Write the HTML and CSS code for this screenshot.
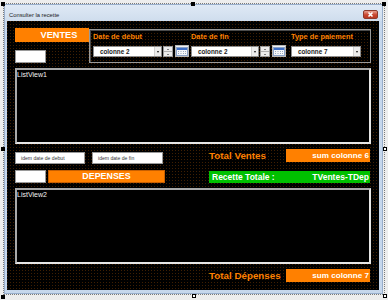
FILE: index.html
```html
<!DOCTYPE html>
<html lang="fr">
<head>
<meta charset="utf-8">
<title>Consulter la recette</title>
<link rel="stylesheet" href="styles.css">
</head>
<body>
<div class="designer">
  <div class="selection"></div>
  <div class="form">
    <div class="titlebar">
      <span class="title">Consulter la recette</span>
      <span class="close"><svg width="15" height="9" viewBox="0 0 15 9"><path d="M5.5 2.5l4 4M9.5 2.5l-4 4" stroke="#fff" stroke-width="1.6"/></svg></span>
    </div>
    <div class="client">
      <div class="row1">
        <div class="leftcol">
          <div class="ventes">VENTES</div>
          <div class="whitebox wb1"></div>
        </div>
        <div class="frame">
          <div class="fcol c1">
            <div class="flabel">Date de début</div>
            <div class="ctrls">
              <div class="combo w69"><span class="ctext">colonne 2</span><span class="drop"><i></i></span></div>
              <div class="spin"><span class="up"><i></i></span><span class="down"><i></i></span></div>
              <div class="cal"><svg width="12" height="9" viewBox="0 0 12 9"><rect x="0.5" y="0.5" width="11" height="8" fill="#f4f7fb" stroke="#8aa2c8"/><rect x="1" y="1" width="10" height="2" fill="#3f6fc6"/><path d="M2 4.5h1M4.5 4.5h1M7 4.5h1M9 4.5h1M2 6.5h1M4.5 6.5h1M7 6.5h1M9 6.5h1" stroke="#9aa8bc"/></svg></div>
            </div>
          </div>
          <div class="fcol c2">
            <div class="flabel">Date de fin</div>
            <div class="ctrls">
              <div class="combo w68"><span class="ctext">colonne 2</span><span class="drop"><i></i></span></div>
              <div class="spin"><span class="up"><i></i></span><span class="down"><i></i></span></div>
              <div class="cal"><svg width="12" height="9" viewBox="0 0 12 9"><rect x="0.5" y="0.5" width="11" height="8" fill="#f4f7fb" stroke="#8aa2c8"/><rect x="1" y="1" width="10" height="2" fill="#3f6fc6"/><path d="M2 4.5h1M4.5 4.5h1M7 4.5h1M9 4.5h1M2 6.5h1M4.5 6.5h1M7 6.5h1M9 6.5h1" stroke="#9aa8bc"/></svg></div>
            </div>
          </div>
          <div class="fcol c3">
            <div class="flabel">Type de paiement</div>
            <div class="ctrls">
              <div class="combo w70"><span class="ctext">colonne 7</span><span class="drop"><i></i></span></div>
            </div>
          </div>
        </div>
      </div>

      <div class="listview lv1"><span class="lvlabel">ListView1</span></div>

      <div class="rowA">
        <div class="tbs">
          <div class="tb tb1">idem date de debut</div>
          <div class="tb tb2">idem date de fin</div>
        </div>
        <div class="rgroup">
          <span class="total">Total Ventes</span>
          <div class="sum">sum colonne 6</div>
        </div>
      </div>

      <div class="rowB">
        <div class="deps">
          <div class="whitebox"></div>
          <div class="depenses">DEPENSES</div>
        </div>
        <div class="green"><span>Recette Totale :</span><span>TVentes-TDep</span></div>
      </div>

      <div class="listview lv2"><span class="lvlabel">ListView2</span></div>

      <div class="rowC">
        <div class="rgroup">
          <span class="total">Total Dépenses</span>
          <div class="sum">sum colonne 7</div>
        </div>
      </div>
    </div>
  </div>
  <span class="handle h-tl"></span>
  <span class="handle h-tm"></span>
  <span class="handle h-tr"></span>
  <span class="handle h-ml"></span>
  <span class="handle open h-mr"></span>
  <span class="handle h-bl"></span>
  <span class="handle open h-bm"></span>
  <span class="handle open h-br"></span>
</div>
</body>
</html>
```

FILE: styles.css
```css
* { box-sizing: border-box; }
html, body { margin: 0; padding: 0; }
body {
  width: 388px;
  height: 300px;
  overflow: hidden;
  background: #ededed;
  font-family: "Liberation Sans", Arial, sans-serif;
}
.designer {
  position: relative;
  width: 388px;
  height: 300px;
  padding: 4px 5px 0 4px;
}
.selection {
  position: absolute;
  left: 3px;
  top: 3px;
  width: 382px;
  height: 292px;
  border: 1px dotted #7a7a7a;
}
.handle {
  position: absolute;
  width: 4px;
  height: 4px;
  background: #000;
}
.handle.open { background: #fff; border: 1px solid #000; }
.h-tl { left: 1px; top: 2px; }
.h-tm { left: 191px; top: 2px; }
.h-tr { left: 382px; top: 2px; }
.h-ml { left: 1px; top: 147px; }
.h-mr { left: 383px; top: 147px; }
.h-bl { left: 1px; top: 295px; }
.h-bm { left: 192px; top: 294px; }
.h-br { left: 383px; top: 294px; }

.form {
  position: relative;
  width: 379px;
  height: 290px;
  padding: 0 3px 3px 2px;
  background: #c6d7ec;
  border: 1px solid #98aecb;
  display: flex;
  flex-direction: column;
}
.titlebar {
  height: 16px;
  margin: 0 -3px 0 -2px;
  padding: 0 4px 0 4px;
  background: linear-gradient(#dfe9f5, #cfdded);
  display: flex;
  align-items: flex-start;
}
.title {
  margin-top: 5px;
  font-size: 5.8px;
  line-height: 10px;
  color: #1b1b1b;
  flex: 1;
}
.close {
  margin-top: 5px;
  width: 15px;
  height: 9px;
  border-radius: 2px;
  background: linear-gradient(#e9a293, #c9462f 55%, #b93a24);
  border: 1px solid #8e3a2c;
  display: flex;
}
.close svg { margin: -1px; }

.client {
  width: 372px;
  height: 269px;
  background:
    conic-gradient(from 270deg at 1px 1px, #3f1f02 90deg, transparent 0) 0 0 / 3px 3px,
    #000;
  padding: 7px 8px 0 8px;
}

.row1 { display: flex; height: 35px; }
.leftcol { width: 74px; }
.ventes {
  height: 14px;
  background: #ff8000;
  color: #fff;
  font-weight: bold;
  font-size: 9.2px;
  line-height: 14px;
  text-align: center;
  padding-left: 14px;
}
.whitebox {
  width: 31px;
  height: 13px;
  background: #fff;
  border: 1px solid #9a9a9a;
}
.wb1 { margin-top: 8px; }

.frame {
  margin-top: 1px;
  width: 282px;
  height: 34px;
  border: 1px solid #9a9a9a;
  box-shadow: inset 1px 1px 0 #4a4a4a;
  padding-left: 3px;
  display: flex;
}
.fcol { display: flex; flex-direction: column; }
.c1 { width: 98px; }
.c2 { width: 100px; }
.flabel {
  margin-top: 2px;
  height: 14px;
  line-height: 10px;
  font-size: 7.4px;
  font-weight: bold;
  color: #ff8000;
  white-space: nowrap;
}
.ctrls { display: flex; align-items: flex-start; }
.combo {
  height: 11px;
  background: #fff;
  border: 1px solid #8c8c8c;
  display: flex;
  align-items: center;
}
.w69 { width: 69px; }
.w68 { width: 68px; }
.w70 { width: 70px; }
.ctext {
  flex: 1;
  padding-left: 6px;
  font-size: 6.3px;
  font-weight: bold;
  color: #222;
  line-height: 9px;
}
.drop {
  width: 7px;
  height: 9px;
  background: #ececec;
  border-left: 1px solid #d0d0d0;
  display: flex;
  align-items: center;
  justify-content: center;
}
.drop i, .spin i {
  display: block;
  width: 0;
  height: 0;
  border-left: 1.5px solid transparent;
  border-right: 1.5px solid transparent;
}
.drop i { border-top: 2px solid #111; }
.spin {
  margin-left: 1px;
  width: 10px;
  height: 11px;
  display: flex;
  flex-direction: column;
  border: 1px solid #9a9a9a;
  background: #ececec;
}
.spin span {
  flex: 1;
  display: flex;
  align-items: center;
  justify-content: center;
}
.spin .up { border-bottom: 1px solid #b0b0b0; }
.spin .up i { border-bottom: 1.5px solid #111; }
.spin .down i { border-top: 1.5px solid #111; }
.cal {
  margin-left: 2px;
  margin-top: -1px;
  width: 14px;
  height: 12px;
  background: linear-gradient(#f3f3f3, #dcdcdc);
  border: 1px solid #b8b8b8;
  display: flex;
  align-items: center;
  justify-content: center;
}

.listview {
  width: 356px;
  height: 76px;
  background: #000;
  border: 2px solid;
  border-color: #a9a9a9 #e6e6e6 #e6e6e6 #a9a9a9;
  padding: 1px 0 0 0;
}
.lv1 { margin-top: 5px; }
.lvlabel {
  display: block;
  color: #f2f2f2;
  font-size: 7px;
  line-height: 8px;
}

.rowA { margin-top: 5px; height: 13px; display: flex; align-items: flex-start; }
.tbs { display: flex; margin-top: 3px; }
.tb {
  width: 70px;
  height: 12px;
  background: #fff;
  border: 1px solid #9a9a9a;
  font-size: 5.1px;
  line-height: 10px;
  color: #333;
  padding-left: 5px;
  white-space: nowrap;
}
.tb2 { margin-left: 7px; width: 71px; }
.rgroup {
  margin-left: auto;
  margin-right: 1px;
  width: 161px;
  display: flex;
}
.total {
  width: 77px;
  line-height: 13px;
  font-size: 9.8px;
  font-weight: bold;
  color: #ff8000;
  white-space: nowrap;
}
.sum {
  width: 84px;
  height: 13px;
  background: #ff8000;
  color: #fff;
  font-size: 8.1px;
  font-weight: bold;
  line-height: 13px;
  text-align: right;
  padding-right: 1px;
  white-space: nowrap;
}

.rowB { margin-top: 8px; display: flex; align-items: flex-start; }
.deps { display: flex; }
.depenses {
  margin-left: 2px;
  width: 117px;
  height: 13px;
  background: #ff8000;
  border: 1px solid #c85f00;
  color: #fff;
  font-size: 8.9px;
  font-weight: bold;
  line-height: 11px;
  text-align: center;
}
.green {
  margin-left: auto;
  margin-right: 1px;
  margin-top: 1px;
  width: 161px;
  height: 12px;
  background: #00c000;
  color: #fff;
  font-size: 8.5px;
  font-weight: bold;
  line-height: 12px;
  display: flex;
  justify-content: space-between;
  padding: 0 1px 0 3px;
  white-space: nowrap;
}
.lv2 { margin-top: 5px; }
.rowC { margin-top: 5px; display: flex; }
```
